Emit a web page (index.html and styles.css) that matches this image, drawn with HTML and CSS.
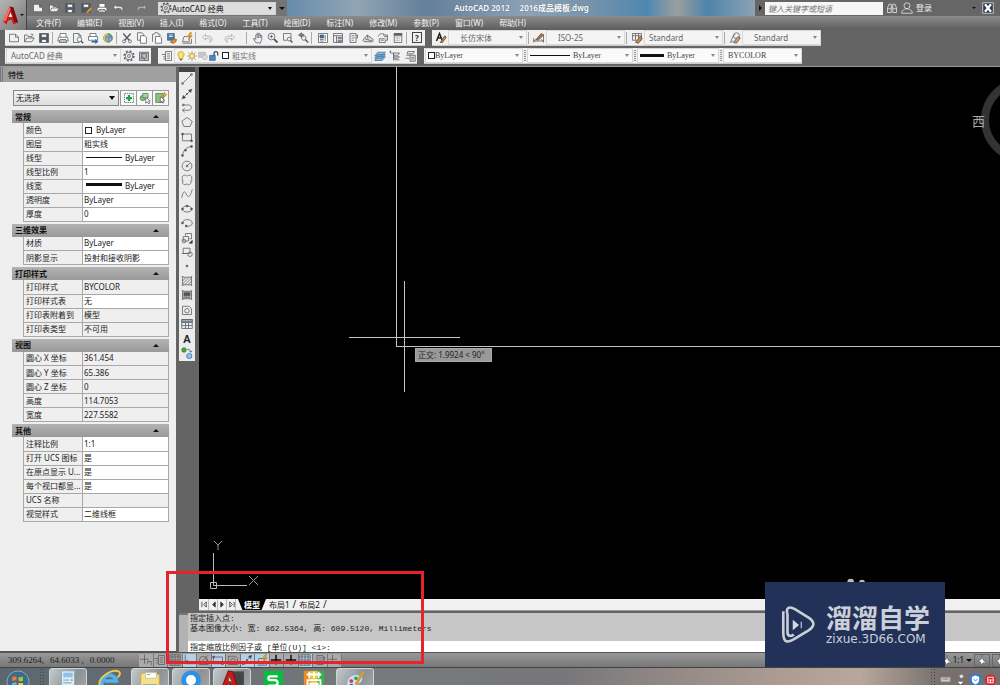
FILE: index.html
```html
<!DOCTYPE html>
<html lang="zh-CN">
<head>
<meta charset="utf-8">
<title>AutoCAD 2012 - 2016成品模板.dwg</title>
<link rel="stylesheet" href="styles.css">
</head>
<body>
<svg class="defs" aria-hidden="true">
  <symbol id="new" viewBox="0 0 16 16"><path d="M2 3h8l4 4v6H2zM10 3v4h4"/></symbol>
  <symbol id="open" viewBox="0 0 16 16"><path d="M2 13V4h4l1 2h5v2M2 13l3-5h10l-3 5zM10 3h3v2"/></symbol>
  <symbol id="save" viewBox="0 0 16 16"><path d="M2 2h12v12H2z" fill="#4d5866"/><path d="M4.500 3h7v4h-7zM5 10h6v4H5z" fill="#fff"/></symbol>
  <symbol id="saveas" viewBox="0 0 16 16"><path d="M2 2h12v12H2z" fill="#4d5866"/><path d="M4.500 3h7v4h-7z" fill="#fff"/><path d="M8 14l6-7 2 2-6 6z" fill="#e5a13b" stroke="#b46a14"/></symbol>
  <symbol id="print" viewBox="0 0 16 16"><path d="M4 7V2h8v5M2 7h12l1 5H1zM4 10h8l1 4H3z" fill="#fff"/></symbol>
  <symbol id="preview" viewBox="0 0 16 16"><path d="M10 14H2V2h7l3 3v2M9 2v3h3"/><circle cx="10" cy="10" r="3" fill="#dff"/><path d="M12 12l3 3" stroke-width="2"/></symbol>
  <symbol id="publish" viewBox="0 0 16 16"><path d="M4 6V2h8v4M2 6h12v5H2z" fill="#fff"/><path d="M6 12h5V9l4 4-4 3v-2H6z" fill="#2a6cb3" stroke="none"/></symbol>
  <symbol id="globe" viewBox="0 0 16 16"><circle cx="8" cy="8" r="6" fill="#e9d24c" stroke="#9a9a55"/><path d="M8 2a6 6 0 016 6l-6 1z" fill="#58a55a" stroke="none"/><path d="M5 6l4-2 4 2v5l-4 2-4-2zM5 6l4 2 4-2M9 8v5" fill="#8fb4dd" stroke="#57789f"/></symbol>
  <symbol id="cut" viewBox="0 0 16 16"><path d="M3 2l8 9M13 2L5 11" stroke-width="1.800"/><circle cx="4" cy="12.500" r="2"/><circle cx="12" cy="12.500" r="2"/></symbol>
  <symbol id="copy" viewBox="0 0 16 16"><path d="M2 11V1h6l2 2v8z"/><path d="M6 15V5h6l2 2v8z" fill="#fff"/></symbol>
  <symbol id="paste" viewBox="0 0 16 16"><path d="M2 13V3h2l1-2h4l1 2h2v3"/><path d="M6 15V6h6l2 2v7z" fill="#fff"/></symbol>
  <symbol id="match" viewBox="0 0 16 16"><path d="M2 2h9v9H2z" fill="#3b78be"/><path d="M4 4h5M4 6h5" stroke="#fff"/><path d="M6 14l4-5 4 1-1 3-3 2z" fill="#dc9339" stroke="#8f5418"/></symbol>
  <symbol id="block" viewBox="0 0 16 16"><path d="M2 13h9V6H4zM2 15h12V9"/><path d="M12 1l-3 5h3l-2 4 5-5h-3l2-4z" fill="#f2b43d" stroke="#c37c19"/></symbol>
  <symbol id="undo" viewBox="0 0 16 16"><path d="M6 3L2 7l4 4V8.500h4c3 0 3 4 1 5 5-1 5-8-1-8H6z"/></symbol>
  <symbol id="redo" viewBox="0 0 16 16"><path d="M10 3l4 4-4 4V8.500H6c-3 0-3 4-1 5-5-1-5-8 1-8h4z"/></symbol>
  <symbol id="hand" viewBox="0 0 16 16"><path d="M5 14L2 9l1-1 2 2V4c0-1 2-1 2 0V2c0-1 2-1 2 0v1c0-1 2-1 2 0v2c0-1 2-1 2 0v5l-2 5zM7 4v4M9 3v5M11 4v4"/></symbol>
  <symbol id="zoom" viewBox="0 0 16 16"><circle cx="6" cy="6" r="4.500" fill="#e4f0f8"/><path d="M4 6h4M6 4v4"/><path d="M9.500 9.500L14 14" stroke-width="2.500"/></symbol>
  <symbol id="zoomwin" viewBox="0 0 16 16"><path d="M2 2h10v7M2 2v9h5"/><circle cx="9.500" cy="9.500" r="2.500"/><path d="M11 11l3 3" stroke-width="2"/></symbol>
  <symbol id="zoomprev" viewBox="0 0 16 16"><circle cx="9" cy="8" r="3"/><path d="M11 10l4 4" stroke-width="2"/><path d="M6 1L2 4l4 3V5h3V3H6z" fill="#888"/></symbol>
  <symbol id="props" viewBox="0 0 16 16"><path d="M2 2h12v12H2z" fill="#fff"/><path d="M4 4h5v4H4z" fill="#2f6cb0"/><path d="M11 4v8M4 10h5M4 12h5"/></symbol>
  <symbol id="dc" viewBox="0 0 16 16"><path d="M2 2h12v12H2zM2 5h12M6 5v9M8 7h2v2H8zM11 7h2v2h-2zM8 11h2v2H8zM11 11h2v2h-2z"/></symbol>
  <symbol id="palette" viewBox="0 0 16 16"><path d="M4 2h8v12H4zM12 4h2v4h-2M6 5h4M6 8h4M6 11h3"/></symbol>
  <symbol id="sheet" viewBox="0 0 16 16"><path d="M1 11l6-7 8 6-1 3H3zM4 9l9 3M7 4l1 5" fill="#ddd"/></symbol>
  <symbol id="markup" viewBox="0 0 16 16"><path d="M2 6c0-4 7-5 8-2M3 9h8v5H3z"/><path d="M8 4h6v7h-3M10 6h3" fill="#ddd"/><path d="M5 11h4"/></symbol>
  <symbol id="calc" viewBox="0 0 16 16"><path d="M3 2h10v12H3zM3 5h10"/><path d="M5 8h6M5 11h6" stroke-dasharray="1 1"/><path d="M3 2h10v2H3z" fill="#666"/></symbol>
  <symbol id="gear" viewBox="0 0 16 16"><circle cx="8" cy="8" r="6.500" stroke-width="2" stroke-dasharray="2.600 2.500"/><circle cx="8" cy="8" r="5"/><circle cx="8" cy="8" r="2"/></symbol>
  <symbol id="wsave" viewBox="0 0 16 16"><path d="M2 3h12v11H2z" fill="#b8bcc0"/><circle cx="8" cy="8" r="3.500"/><path d="M3 12l3-3 3 4M10 4h3M4 5h3"/></symbol>
  <symbol id="style" viewBox="0 0 16 16"><path d="M2 12L6 2l4 10M3.500 8h5" stroke="#222" stroke-width="2"/><path d="M7 14l6-9 2 2-5 7z" fill="#bf854e" stroke="#70441f"/></symbol>
  <symbol id="dim" viewBox="0 0 16 16"><path d="M1 8v6M14 3v11M1 12h13M1 12l3-2M14 12l-3-2"/><path d="M4 10l7-8 3 2-7 7z" fill="#a87547" stroke="#70441f"/></symbol>
  <symbol id="tablestyle" viewBox="0 0 16 16"><path d="M2 2h12v9H2zM2 5h12M6 2v9M10 2v9"/><path d="M6 14l6-8 3 2-5 7z" fill="#c78f55" stroke="#70441f"/></symbol>
  <symbol id="leader" viewBox="0 0 16 16"><path d="M2 14l3-8 3-3M2 14l4-2"/><circle cx="10" cy="5" r="4"/><path d="M6 14l6-8 3 2-5 7z" fill="#c9a37e" stroke="#70441f"/></symbol>
  <symbol id="layers" viewBox="0 0 16 16"><path d="M1 8l4-5h10l-4 5zM1 11l4-5h10l-4 5zM1 14l4-5h10l-4 5z" fill="#8fbce5" stroke="#3d6f9f"/></symbol>
  <symbol id="layerprop" viewBox="0 0 16 16"><path d="M6 2h8v12H6zM8 5h4M8 8h4M8 11h4M1 6h5M3 9h3M3 12h3"/></symbol>
  <symbol id="layerprev" viewBox="0 0 16 16"><path d="M6 4h8l-2 3H6zM7 9h7l-2 2H7zM7 13h7M6 4v10M2 1v3h4M2 1L1 3"/></symbol>
  <symbol id="layerstate" viewBox="0 0 16 16"><path d="M5 2h9l-2 3H4zM3 7h6M2 11h5"/><path d="M8 7h7v8H8zM10 10h3M10 12h3" fill="#ddd"/></symbol>
  <symbol id="bulb" viewBox="0 0 16 16"><path d="M5 10C1 5 4 1 8 1s7 4 3 9v2H5z" fill="#ffe45c" stroke="#a18a22"/><path d="M6 14h4" stroke-width="2"/></symbol>
  <symbol id="sun" viewBox="0 0 16 16"><path d="M8 0v16M0 8h16M2 2l12 12M14 2L2 14" stroke="#98823a"/><circle cx="8" cy="8" r="4" fill="#ffe98a" stroke="#98823a"/></symbol>
  <symbol id="vpfreeze" viewBox="0 0 16 16"><path d="M1 2h11v8H1z" fill="#c9c9c9" stroke="#aaa"/><circle cx="11" cy="10" r="4" fill="#ddd" stroke="#aaa"/></symbol>
  <symbol id="lock" viewBox="0 0 16 16"><path d="M1 7h9v8H1z" fill="#4a8ac4" stroke="#28527c"/><path d="M8 7V4c0-4 6-4 6 0v3" stroke="#28527c" stroke-width="2"/></symbol>
  <symbol id="select-add" viewBox="0 0 16 16"><path d="M2 2h12v12H2z" stroke-dasharray="2 1"/><path d="M8 4v8M4 8h8" stroke="#22a33b" stroke-width="3"/></symbol>
  <symbol id="select-obj" viewBox="0 0 16 16"><circle cx="5" cy="8" r="3.500" fill="#8cc28d" stroke="#4b7a4b"/><path d="M5 2h7v6H5z" fill="#a9d3a7" stroke="#4b7a4b"/><path d="M9 7v8l2-2 2 3 1-1-1-3h2z" fill="#fff"/></symbol>
  <symbol id="quickselect" viewBox="0 0 16 16"><path d="M1 2h10v12H1z" fill="#8dc281" stroke="#4b7a4b"/><path d="M7 6v8l2-2 2 3 1-1-1-3h2z" fill="#fff"/><path d="M13 0l-3 5h3l-2 3 5-5h-3z" fill="#f4bd3a" stroke="#bd7c17"/></symbol>
  <symbol id="line" viewBox="0 0 16 16"><path d="M2 14L14 2"/><path d="M1 13h2v2H1zM13 1h2v2h-2z"/></symbol>
  <symbol id="xline" viewBox="0 0 16 16"><path d="M1 15L15 1"/><path d="M2 14l1-4 3 3zM14 2l-1 4-3-3zM7 8l1-1 1 1-1 1z" fill="#333"/></symbol>
  <symbol id="pline" viewBox="0 0 16 16"><path d="M3 4h7c5 0 5 7 0 7H2M5 8l-3 3 3 3M2 3h2v2H2z"/></symbol>
  <symbol id="polygon" viewBox="0 0 16 16"><path d="M8 2l7 5-3 7H4L1 7z"/></symbol>
  <symbol id="rect" viewBox="0 0 16 16"><path d="M2 4h12v9H2z"/><path d="M1 3h2v2H1zM13 12h2v2h-2z" fill="#333"/></symbol>
  <symbol id="arc" viewBox="0 0 16 16"><path d="M2 14C3 7 7 3 14 2"/><path d="M1 13h2v2H1zM13 1h2v2h-2zM5 6h2v2H5z" fill="#333"/></symbol>
  <symbol id="circle" viewBox="0 0 16 16"><circle cx="8" cy="8" r="6.500"/><path d="M8 8l4-4M7 7h2v2H7z"/></symbol>
  <symbol id="cloud" viewBox="0 0 16 16"><path d="M8 3c2-3 8-1 6 3 1 1 1 3-1 3 2 4-3 7-5 4-3 3-8 0-5-4-2 0-2-2-1-3C0 2 6 0 8 3z"/></symbol>
  <symbol id="spline" viewBox="0 0 16 16"><path d="M1 13C4-2 7 9 8 10c3 4 5-1 7-8"/></symbol>
  <symbol id="ellipse" viewBox="0 0 16 16"><ellipse cx="8" cy="8" rx="6" ry="4"/><path d="M1 7h2v2H1zM13 7h2v2h-2zM7 3h2v2H7z" fill="#333"/></symbol>
  <symbol id="earc" viewBox="0 0 16 16"><path d="M2 8c0-6 13-6 13 0 0 4-5 5-8 4"/><path d="M1 7h2v2H1zM6 11h2v2H6z" fill="#333"/></symbol>
  <symbol id="insert" viewBox="0 0 16 16"><path d="M6 2h8v7h-3M6 2v3M3 6h7v6H3z"/><circle cx="4" cy="12" r="2.500"/><path d="M11 15h4v-4z" fill="#222"/></symbol>
  <symbol id="mkblock" viewBox="0 0 16 16"><path d="M3 3h9v7H3zM1 10h6"/><circle cx="12" cy="11" r="3"/></symbol>
  <symbol id="point" viewBox="0 0 16 16"><path d="M7 7h2v2H7z" fill="#555"/></symbol>
  <symbol id="hatch" viewBox="0 0 16 16"><path d="M2 3h12v10H2zM1 2h2M13 2h2M1 14h2M13 14h2M2 8l5-5M2 12l9-9M5 13l9-9M9 13l5-5"/></symbol>
  <symbol id="gradient" viewBox="0 0 16 16"><path d="M2 3h12v10H2z" fill="#bbb"/><path d="M4 5h8v4H4z" fill="#555"/><path d="M1 2h2M13 2h2M1 14h2M13 14h2M3 11h9"/></symbol>
  <symbol id="region" viewBox="0 0 16 16"><path d="M2 14V3h9l3 3v8z"/><circle cx="8" cy="9" r="3"/></symbol>
  <symbol id="table" viewBox="0 0 16 16"><path d="M1 2h14v12H1zM1 6h14M1 10h14M6 6v8M10 6v8"/><path d="M1 2h14v3H1z" fill="#9ab"/></symbol>
  <symbol id="addsel" viewBox="0 0 16 16"><circle cx="4" cy="4" r="3" fill="#4ea44b" stroke="#2d762b"/><circle cx="11" cy="12" r="3.500" fill="#8ec4ef" stroke="#2c72b3"/><path d="M8 3c4 0 5 2 5 4M11 5l2 2 2-2"/></symbol>
  <symbol id="binoc" viewBox="0 0 16 16"><path d="M2 14V8l2-5h3v11zM9 14V3h3l2 5v6zM7 7h2M2 9h5M9 9h5"/></symbol>
  <symbol id="user" viewBox="0 0 16 16"><circle cx="8" cy="5" r="4"/><path d="M1 15c0-5 3-4 5-6h4c2 2 5 1 5 6z"/></symbol>
  <symbol id="snap" viewBox="0 0 16 16"><path d="M6 1v12M0 7h12M10 10h5v5M10 10v3"/></symbol>
  <symbol id="grid" viewBox="0 0 16 16"><path d="M1 1h14v14H1zM4 1v14M8 1v14M12 1v14M1 4h14M1 8h14M1 12h14"/></symbol>
  <symbol id="ortho" viewBox="0 0 16 16"><path d="M3 1v12h12M3 9h4v4"/></symbol>
  <symbol id="polar" viewBox="0 0 16 16"><path d="M1 14h13M2 13L13 2M10 4a8 8 0 013 8"/><circle cx="7" cy="8" r="5"/></symbol>
  <symbol id="plus" viewBox="0 0 16 16"><path d="M8 1v13M1 8h14" stroke="#111" stroke-width="2"/></symbol>
  <symbol id="annot" viewBox="0 0 16 16"><path d="M7 1l2 7 5 5-5-1-3 3-1-4-4-1 5-3z" fill="#fff"/></symbol>
</svg>

<header class="header">
  <button class="app-button" aria-label="应用程序菜单">
    <svg class="app-logo" viewBox="0 0 18 22"><path d="M1 18L8 2l4 1 5 16-5 2-2-5-4 1-1 4z" fill="#c81d1d"/><path d="M8 2l4 1 5 16-4-1z" fill="#7c0c0d"/><path d="M7 13l2-5 2 5z" fill="#eee"/><path d="M1 18L8 2l1 3-5 12z" fill="#ff6b62"/></svg>
    <i class="caret"></i>
  </button>
  <div class="titlebar">
    <div class="quick">
      <button aria-label="新建"><svg><use href="#new"/></svg></button><button aria-label="打开"><svg><use href="#open"/></svg></button><button aria-label="保存"><svg><use href="#save"/></svg></button><button aria-label="另存为"><svg><use href="#saveas"/></svg></button><button aria-label="打印"><svg><use href="#print"/></svg></button><button aria-label="放弃"><svg><use href="#undo"/></svg></button><i class="dot"></i><button class="dim" aria-label="重做"><svg><use href="#redo"/></svg></button><i class="dot"></i>
    </div>
    <div class="combo workspace-title"><svg><use href="#gear"/></svg><select aria-label="工作空间"><option>AutoCAD 经典</option></select></div>
    <button class="more" aria-label="自定义"><i class="caret"></i></button>
    <h1 class="title"><span>AutoCAD 2012</span><span>2016成品模板.dwg</span></h1>
    <div class="info">
      <button class="expand" aria-label="展开"></button>
      <input class="search" type="search" aria-label="搜索" placeholder="键入关键字或短语">
      <button aria-label="查找"><svg><use href="#binoc"/></svg></button>
      <button class="login"><svg><use href="#user"/></svg>登录</button>
      <i class="caret"></i>
      <button class="exchange" aria-label="Exchange"><svg viewBox="0 0 16 16"><path d="M1 1h14v14H1z" fill="#28394d"/><path d="M4 3l8 10M12 3L4 13" stroke="#fff" stroke-width="3"/></svg></button>
    </div>
  </div>
  <nav class="menubar">
    <button>文件(F)</button><button>编辑(E)</button><button>视图(V)</button><button>插入(I)</button><button>格式(O)</button><button>工具(T)</button><button>绘图(D)</button><button>标注(N)</button><button>修改(M)</button><button>参数(P)</button><button>窗口(W)</button><button>帮助(H)</button>
  </nav>
</header>

<div class="toolbars">
  <div class="toolrow">
    <div class="toolbar">
      <button aria-label="新建"><svg><use href="#new"/></svg></button><button aria-label="打开"><svg><use href="#open"/></svg></button><button aria-label="保存"><svg><use href="#save"/></svg></button><i class="sep"></i>
      <button aria-label="打印"><svg><use href="#print"/></svg></button><button aria-label="打印预览"><svg><use href="#preview"/></svg></button><button aria-label="发布"><svg><use href="#publish"/></svg></button><button aria-label="三维DWF"><svg><use href="#globe"/></svg></button><i class="sep"></i>
      <button aria-label="剪切"><svg><use href="#cut"/></svg></button><button aria-label="复制"><svg><use href="#copy"/></svg></button><button aria-label="粘贴"><svg><use href="#paste"/></svg></button><button aria-label="特性匹配"><svg><use href="#match"/></svg></button><button aria-label="块编辑器"><svg><use href="#block"/></svg></button><i class="sep wide"></i>
      <button class="dim" aria-label="放弃"><svg><use href="#undo"/></svg></button><i class="dot"></i><button class="dim" aria-label="重做"><svg><use href="#redo"/></svg></button><i class="dot"></i><i class="sep wide"></i>
      <button aria-label="平移"><svg><use href="#hand"/></svg></button><button aria-label="实时缩放"><svg><use href="#zoom"/></svg></button><button aria-label="窗口缩放"><svg><use href="#zoomwin"/></svg></button><button aria-label="缩放上一个"><svg><use href="#zoomprev"/></svg></button><i class="sep wide"></i>
      <button aria-label="特性"><svg><use href="#props"/></svg></button><button aria-label="设计中心"><svg><use href="#dc"/></svg></button><button aria-label="工具选项板"><svg><use href="#palette"/></svg></button><button aria-label="图纸集"><svg><use href="#sheet"/></svg></button><button aria-label="标记集"><svg><use href="#markup"/></svg></button><button aria-label="计算器"><svg><use href="#calc"/></svg></button><i class="sep wide"></i>
      <button class="help">?</button>
    </div>
    <div class="toolbar">
      <button aria-label="文字样式"><svg><use href="#style"/></svg></button><div class="combo w79"><select class="mid" aria-label="文字样式"><option>长仿宋体</option></select></div><i class="sep"></i>
      <button aria-label="标注样式"><svg><use href="#dim"/></svg></button><div class="combo w79"><select class="mid" aria-label="标注样式"><option>ISO-25</option></select></div><i class="sep"></i>
      <button aria-label="表格样式"><svg><use href="#tablestyle"/></svg></button><div class="combo w79"><select class="near" aria-label="表格样式"><option>Standard</option></select></div><i class="sep"></i>
      <button aria-label="引线样式"><svg><use href="#leader"/></svg></button><div class="combo w79"><select class="mid" aria-label="引线样式"><option>Standard</option></select></div>
    </div>
  </div>
  <div class="toolrow">
    <div class="toolbar">
      <div class="combo w115"><select class="near" aria-label="工作空间"><option>AutoCAD 经典</option></select></div><button aria-label="工作空间设置"><svg><use href="#gear"/></svg></button><button aria-label="保存工作空间"><svg><use href="#wsave"/></svg></button>
    </div>
    <div class="toolbar layer-bar">
      <button aria-label="图层特性"><svg><use href="#layerprop"/></svg></button>
      <div class="combo w198"><svg><use href="#bulb"/></svg><svg><use href="#sun"/></svg><svg><use href="#vpfreeze"/></svg><svg><use href="#lock"/></svg><i class="swatch"></i><select aria-label="图层"><option>粗实线</option></select></div>
      <button aria-label="图层"><svg><use href="#layers"/></svg></button><button aria-label="上一个图层"><svg><use href="#layerprev"/></svg></button><button aria-label="图层状态"><svg><use href="#layerstate"/></svg></button>
    </div>
    <div class="toolbar serif">
      <div class="combo w98"><i class="swatch"></i><select aria-label="颜色"><option>ByLayer</option></select></div><i class="grip"></i>
      <div class="combo w106"><i class="stroke thin"></i><select aria-label="线型"><option>ByLayer</option></select></div><i class="grip"></i>
      <div class="combo w82"><i class="stroke thick"></i><select aria-label="线宽"><option>ByLayer</option></select></div><i class="grip"></i>
      <div class="combo w79"><select class="near" aria-label="打印样式"><option>BYCOLOR</option></select></div>
    </div>
  </div>
</div>

<main class="main">
  <aside class="palette">
    <h2 class="palette-title">特性</h2>
    <div class="selection">
      <div class="combo"><select aria-label="选择"><option>无选择</option></select></div>
      <button aria-label="切换 PICKADD"><svg><use href="#select-add"/></svg></button><button aria-label="选择对象"><svg><use href="#select-obj"/></svg></button><button aria-label="快速选择"><svg><use href="#quickselect"/></svg></button>
    </div>
    <section class="group"><h3>常规<i class="up"></i></h3>
      <table>
        <tr><th>颜色</th><td><i class="swatch"></i>ByLayer</td></tr>
        <tr><th>图层</th><td>粗实线</td></tr>
        <tr><th>线型</th><td><i class="stroke thin"></i>ByLayer</td></tr>
        <tr><th>线型比例</th><td>1</td></tr>
        <tr><th>线宽</th><td><i class="stroke thick"></i>ByLayer</td></tr>
        <tr><th>透明度</th><td>ByLayer</td></tr>
        <tr><th>厚度</th><td>0</td></tr>
      </table>
    </section>
    <section class="group"><h3>三维效果<i class="up"></i></h3>
      <table>
        <tr><th>材质</th><td>ByLayer</td></tr>
        <tr><th>阴影显示</th><td>投射和接收阴影</td></tr>
      </table>
    </section>
    <section class="group"><h3>打印样式<i class="up"></i></h3>
      <table>
        <tr><th>打印样式</th><td class="ro">BYCOLOR</td></tr>
        <tr><th>打印样式表</th><td>无</td></tr>
        <tr><th>打印表附着到</th><td class="ro">模型</td></tr>
        <tr><th>打印表类型</th><td class="ro">不可用</td></tr>
      </table>
    </section>
    <section class="group"><h3>视图<i class="up"></i></h3>
      <table>
        <tr><th>圆心 X 坐标</th><td class="ro">361.454</td></tr>
        <tr><th>圆心 Y 坐标</th><td class="ro">65.386</td></tr>
        <tr><th>圆心 Z 坐标</th><td class="ro">0</td></tr>
        <tr><th>高度</th><td class="ro">114.7053</td></tr>
        <tr><th>宽度</th><td class="ro">227.5582</td></tr>
      </table>
    </section>
    <section class="group"><h3>其他<i class="up"></i></h3>
      <table>
        <tr><th>注释比例</th><td>1:1</td></tr>
        <tr><th>打开 UCS 图标</th><td>是</td></tr>
        <tr><th>在原点显示 U...</th><td>是</td></tr>
        <tr><th>每个视口都显...</th><td>是</td></tr>
        <tr><th>UCS 名称</th><td class="ro"></td></tr>
        <tr><th>视觉样式</th><td>二维线框</td></tr>
      </table>
    </section>
  </aside>

  <div class="work">
    <div class="work-top">
      <div class="draw-tools">
        <button aria-label="直线"><svg><use href="#line"/></svg></button><button aria-label="构造线"><svg><use href="#xline"/></svg></button><button aria-label="多段线"><svg><use href="#pline"/></svg></button><button aria-label="正多边形"><svg><use href="#polygon"/></svg></button><button aria-label="矩形"><svg><use href="#rect"/></svg></button><button aria-label="圆弧"><svg><use href="#arc"/></svg></button><button aria-label="圆"><svg><use href="#circle"/></svg></button><button aria-label="修订云线"><svg><use href="#cloud"/></svg></button><button aria-label="样条曲线"><svg><use href="#spline"/></svg></button><button aria-label="椭圆"><svg><use href="#ellipse"/></svg></button><button aria-label="椭圆弧"><svg><use href="#earc"/></svg></button><button aria-label="插入块"><svg><use href="#insert"/></svg></button><button aria-label="创建块"><svg><use href="#mkblock"/></svg></button><button aria-label="点"><svg><use href="#point"/></svg></button><button aria-label="图案填充"><svg><use href="#hatch"/></svg></button><button aria-label="渐变色"><svg><use href="#gradient"/></svg></button><button aria-label="面域"><svg><use href="#region"/></svg></button><button aria-label="表格"><svg><use href="#table"/></svg></button><button class="mtext">A</button><button aria-label="添加选定对象"><svg><use href="#addsel"/></svg></button>
      </div>
      <div class="viewport">
        <div class="canvas">
          <svg class="drawing"><g stroke="#c4c4c4"><path d="M197.500 0V279.500"/><line x1="197" y1="279.500" x2="100%" y2="279.500"/><path d="M205.500 214V325M150 270.500H261"/></g></svg>
          <div class="tip">正交: 1.9924 &lt; 90°</div>
          <svg class="compass" viewBox="0 0 30 90"><circle cx="53" cy="45" r="38" stroke="#333" stroke-width="8"/><text x="2" y="51">西</text></svg>
          <svg class="ucs" viewBox="0 0 60 52"><path d="M4.500 9V41.500H38M1.500 38.500h6v6h-6z" stroke="#bbb"/><path d="M5 -3l4 4 4-4M9 1v5M40 32l9 9M49 32l-9 9" stroke="#999"/></svg>
        </div>
        <div class="tabs">
          <div class="tabnav"><button aria-label="第一个"><svg viewBox="0 0 8 8"><path d="M1 1v6M6 1L3 4l3 3z"/></svg></button><button aria-label="上一个"><svg viewBox="0 0 8 8"><path d="M6 1L3 4l3 3z" fill="#333"/></svg></button><button aria-label="下一个"><svg viewBox="0 0 8 8"><path d="M2 1l3 3-3 3z" fill="#333"/></svg></button><button aria-label="最后一个"><svg viewBox="0 0 8 8"><path d="M2 1l3 3-3 3zM7 1v6"/></svg></button></div>
          <button class="tab active">模型</button><button class="tab">布局1</button><span class="slash">/</span><button class="tab">布局2</button><span class="slash">/</span>
        </div>
      </div>
    </div>
    <div class="command">
      <div class="handle"></div>
      <div class="console">
        <div class="history">指定插入点:<br>基本图像大小: 宽: 862.5364, 高: 609.5120, Millimeters</div>
        <input class="prompt" aria-label="命令行" value="指定缩放比例因子或 [单位(U)] &lt;1&gt;:">
      </div>
    </div>
  </div>
</main>

<footer class="status">
  <div class="coords"><span>309.6264,</span><span>64.6033 ,</span><span>0.0000</span></div>
  <div class="modes">
    <button aria-label="推断约束"><svg><use href="#snap"/></svg></button><button aria-label="捕捉"><svg><use href="#layerprop"/></svg></button><button aria-label="栅格"><svg><use href="#grid"/></svg></button><button class="on" aria-label="正交"><svg><use href="#ortho"/></svg></button><button aria-label="极轴"><svg><use href="#polar"/></svg></button><button class="on" aria-label="对象捕捉"><svg><use href="#rect"/></svg></button><button aria-label="三维捕捉"><svg><use href="#region"/></svg></button><button class="on" aria-label="对象追踪"><svg><use href="#xline"/></svg></button><button class="on" aria-label="动态UCS"><svg><use href="#block"/></svg></button><button aria-label="动态输入"><svg><use href="#plus"/></svg></button><button aria-label="线宽"><svg><use href="#plus"/></svg></button><button class="on" aria-label="透明度"><svg><use href="#grid"/></svg></button><button aria-label="快捷特性"><svg><use href="#palette"/></svg></button><button aria-label="选择循环"><svg><use href="#snap"/></svg></button>
  </div>
  <div class="scale"><svg><use href="#annot"/></svg><button>1:1</button><i class="caret"></i><button class="lit" aria-label="注释可见性"><svg><use href="#annot"/></svg></button><button aria-label="自动添加比例"><svg><use href="#annot"/></svg></button></div>
</footer>

<div class="taskbar">
  <button class="start" aria-label="开始"><svg viewBox="0 0 26 26"><circle cx="13" cy="13" r="12" fill="#356d94" stroke="#9ab"/><path d="M6 8q3-3 6-1v5q-3-1-6 1z" fill="#ee7b3c"/><path d="M13 7q3 1 6-1v6q-3 2-6 0z" fill="#94cb52"/><path d="M6 14q3-2 6-1v5q-3-1-6 1z" fill="#5bb5eb"/><path d="M13 13q3 2 6 0v6q-3 1-6-1z" fill="#f8d648"/></svg></button>
  <i class="dots"></i>
  <button class="task open" aria-label="文档"><svg viewBox="0 0 26 26"><path d="M6 2h14v22H6z" fill="#dcecf8" stroke="#8ab"/><path d="M8 4h10v5H8z" fill="#8fc0e8" stroke="none"/><path d="M8 12h6M8 15h9" stroke="#7a9cb8"/><path d="M16 11h2v2h-2z" fill="#e4a33a" stroke="none"/></svg></button>
  <button class="task" aria-label="浏览器"><svg viewBox="0 0 26 26"><path d="M20 19a8 8 0 11 1-6H8" stroke="#4fb4f0" stroke-width="4"/><path d="M3 18C0 9 17-1 24 3c2 2 0 5-2 6" stroke="#f1c84a" stroke-width="2"/></svg></button>
  <button class="task open" aria-label="资源管理器"><svg viewBox="0 0 26 26"><path d="M3 5l9-2 2 3h9v20H3z" fill="#f6df8a" stroke="#c9a84c"/><path d="M8 4h12v6H8z" fill="#fff" stroke="#c9c2a0"/><path d="M10 6h3" stroke="#4a9"/><path d="M6 17h14v9H6z" fill="#8fc2e8" stroke="#7aa4c4"/></svg></button>
  <button class="task open" aria-label="云盘"><svg viewBox="0 0 26 26"><circle cx="13" cy="12" r="8" fill="#fff" stroke="#2c92e8" stroke-width="5"/><path d="M14 22c0-6 8-6 9-2 3 0 3 5 0 5h-8z" fill="#fff" stroke="none"/></svg></button>
  <button class="task open" aria-label="AutoCAD"><svg viewBox="0 0 26 26"><path d="M13 3h13v16H13z" fill="#444"/><path d="M2 20L9 2l5 1 5 17-5-2-5-2z" fill="#cc1717" stroke="#7c0c0d"/><path d="M10 8l3 6-4-1z" fill="#eee"/></svg></button>
  <button class="task" aria-label="WPS"><svg viewBox="0 0 26 26"><path d="M3 2h21v23H3z" fill="#08bd3b" stroke="none"/><path d="M18 8H10q-2 0-2 2t2 2h5q3 0 3 3t-3 3H8" stroke="#fff" stroke-width="2.500"/></svg></button>
  <button class="task" aria-label="看图"><svg viewBox="0 0 26 26"><path d="M2 2h7v24H2z" fill="#f08a28" stroke="none"/><path d="M9 2h8v24H9z" fill="#e8ce2f" stroke="none"/><path d="M17 2h7v24h-7z" fill="#39b24c" stroke="none"/><path d="M5 6h16M8 3v7M13 3v7M18 3v7M6 12h14v12H6zM9 16h8v5H9z" stroke="#fff" stroke-width="2"/></svg></button>
  <button class="task open" aria-label="画图"><svg viewBox="0 0 26 26"><path d="M4 16C4 8 12 4 18 7c6 3 2 8-1 9-2 1-2 6-6 7-4 0-7-3-7-7z" fill="#c8e0ef" stroke="#7fa7bf"/><circle cx="9" cy="13" r="2" fill="#d33" stroke="none"/><circle cx="14" cy="10" r="2" fill="#3a4" stroke="none"/><circle cx="9" cy="18" r="2" fill="#36c" stroke="none"/><path d="M14 17l8-14" stroke="#d29b41" stroke-width="3"/></svg></button>
  <div class="tray">
    <i class="dots"></i>
    <svg viewBox="0 0 12 12"><path d="M1 3h10v5H1z" fill="#ccc" stroke="#999"/><path d="M3 5h6" stroke="#777"/></svg>
    <svg viewBox="0 0 12 12"><circle cx="7" cy="2" r="2" fill="#ddd" stroke="none"/><path d="M3 8h6l-3 3z" fill="#fff" stroke="none"/></svg>
    <svg viewBox="0 0 12 12"><path d="M6 0l5 2v4q0 4-5 6-5-2-5-6V2z" fill="#fff" stroke="#2b78e8" stroke-width="2"/><path d="M4 5l2 2 2-2" stroke="#2b78e8"/></svg>
    <svg viewBox="0 0 12 12"><circle cx="6" cy="6" r="6" fill="#d8232a" stroke="none"/><path d="M3 3h6v6H3zM3 6h6M6 6v3" stroke="#fff"/></svg>
  </div>
</div>

<div class="highlight"></div>
<div class="watermark">
  <svg class="blobs" viewBox="0 0 28 6"><circle cx="6" cy="6" r="5"/><circle cx="23" cy="7" r="4.500"/></svg>
  <svg class="play" viewBox="0 0 36 36"><path d="M5 5v20c0 12 6 9 11 6l13-8c6-4 6-8 0-12L16 3C11 0 7 1 9 8v17c0 4 4 4 6 2" stroke="#c9ced6" stroke-width="2.500"/><path d="M14 13l6 5-6 5z" fill="#d5d9df" stroke="none"/><path d="M22 15v6" stroke="#d5d9df"/></svg>
  <div class="brand"><strong>溜溜自学</strong><span>zixue.3D66.COM</span></div>
</div>
</body>
</html>
```

FILE: styles.css
```css
* { box-sizing: border-box; }
body {
  margin: 0;
  height: 100vh;
  display: flex;
  flex-direction: column;
  position: relative;
  overflow: hidden;
  background: #646464;
  color: #222;
  font: 8px/12px "Noto Sans", "Noto Sans CJK SC", sans-serif;
}
button, select, input {
  font: inherit;
  color: inherit;
  margin: 0;
  padding: 0;
  border: 0;
  border-radius: 0;
  background: none;
  appearance: none;
  outline: 0;
}
h1, h2, h3 { margin: 0; font-size: 8px; }
i { font-style: normal; flex: none; }
svg { display: block; flex: none; fill: none; stroke: #555a60; stroke-width: 1; }
button svg, .combo svg { width: 12px; height: 12px; }
.defs { position: absolute; width: 0; height: 0; }
button { display: flex; align-items: center; justify-content: center; flex: none; white-space: nowrap; }
.caret { border: 3px solid transparent; border-top-color: #111; border-bottom: 0; width: 0; }
.dot { width: 8px; height: 2px; background: radial-gradient(#777 1px, transparent 1px); }
.dim { opacity: 0.500; }

/* Header */
.header {
  flex: none;
  display: grid;
  grid-template-columns: 27px 1fr;
  grid-template-rows: 16px 14px;
  background: linear-gradient(#777, #666 50%, #8b8b8b 54%, #5d5d5d);
}
.app-button { grid-row: 1 / 3; background: linear-gradient(135deg, #b5b5b5, #777); border-right: 1px solid #444; gap: 1px; }
.app-button .app-logo { width: 17px; height: 22px; stroke: none; }
.app-button .caret { border-width: 2px 2px 0; }
.titlebar {
  display: flex;
  align-items: center;
  background: linear-gradient(90deg, #747474 0 260px, #668cac 260px, #91a4b5 330px, #647f9a 400px, #8ca2b6 500px, #7894aa 560px, #4f87b0 620px, #9c9f9f 650px, #4f83aa 680px, #8ca3b3 728px, #666 728px);
}
.quick { display: flex; align-items: center; padding-left: 3px; width: 131px; flex: none; }
.quick button { width: 16px; height: 14px; }
.quick svg { fill: #eee; }
.combo { display: flex; align-items: center; position: relative; height: 15px; background: #f4f4f4; border: 1px solid #d8d8d8; flex: none; }
.combo select { flex: 1; min-width: 0; height: 100%; padding-right: 10px; line-height: 12px; }
.combo::after { content: ""; position: absolute; right: 3px; top: 5px; border: 2px solid transparent; border-top: 3px solid #888; border-bottom: 0; pointer-events: none; }
.workspace-title { width: 118px; height: 13px; background: #ddd; padding-left: 1px; }
.workspace-title::after { border-top-color: #111; top: 4px; }
.workspace-title select { color: #111; }
.more { width: 12px; height: 13px; }
.title { flex: 1; display: flex; justify-content: center; gap: 10px; color: #fff; font-weight: 600; line-height: 16px; text-shadow: 0 0 1px #567; }
.info { width: 245px; display: flex; align-items: center; color: #eee; flex: none; }
.expand { width: 10px; height: 12px; }
.expand::before { content: ""; border: 3px solid transparent; border-left-color: #111; border-right: 0; }
.search { width: 118px; height: 13px; background: #f6f6f6; padding: 0 3px; font-style: italic; color: #333; }
.search::placeholder { color: #777; opacity: 1; }
.info button svg { stroke: #e8edf2; }
.info > button { margin-left: 3px; }
.info > .expand { margin-left: 0; }
.info .login { gap: 3px; }
.info .caret { margin-left: auto; border-width: 2px 2px 0; }
.info .exchange { margin: 0 6px; }
.menubar { display: flex; gap: 16px; padding-left: 9px; color: #f1f1f1; }

/* Toolbars */
.toolbars { flex: none; display: grid; gap: 2px; padding-bottom: 2px; border-bottom: 1px solid #999; background: #646464; }
.toolrow { display: flex; gap: 7px; padding-left: 5px; }
.toolbar { display: flex; align-items: center; height: 16px; background: #f1f1f1; padding-left: 1px; color: #666; border-bottom: 1px solid #ccc; flex: none; }
.toolbar button { width: 15px; height: 15px; }
.sep { width: 4px; height: 12px; background: linear-gradient(90deg, transparent 1px, #aaa 1px 2px, transparent 2px); }
.sep.wide { width: 5px; }
.help { font-weight: 700; color: #333; line-height: 9px; }
.toolbar .help { width: 10px; height: 11px; margin: 0 3px 0 2px; border: 1px solid #444; }
.w79 { width: 79px; }
.w115 { width: 115px; }
.w198 { width: 198px; }
.w98 { width: 98px; }
.w106 { width: 106px; }
.w82 { width: 82px; }
.combo .mid { padding-left: 11px; }
.combo .near { padding-left: 4px; }
.layer-bar { color: #777; }
.layer-bar .combo { gap: 1px; padding-left: 1px; }
.layer-bar .combo svg { width: 10px; height: 10px; }
.swatch { display: inline-block; width: 7px; height: 7px; border: 1px solid #222; background: #fff; margin: 0 2px; vertical-align: -1px; }
.serif { font-family: "Liberation Serif", serif; color: #444; }
.serif .combo { background: #fafafa; }
.serif .swatch { margin-right: 0; }
.grip { width: 4px; height: 13px; background: repeating-linear-gradient(#999 0 1px, #eee 1px 2px); border: 1px solid #eee; }
.stroke { display: inline-block; background: #111; vertical-align: 3px; margin-right: 3px; }
.stroke.thin { width: 40px; height: 1px; }
.stroke.thick { width: 24px; height: 3px; }
.serif .stroke { margin-left: 2px; }

/* Body */
.main { flex: 1; min-height: 0; display: flex; }
.palette { width: 176px; flex: none; background: #efefef; border-bottom: 1px solid #555; overflow: hidden; }
.palette-title { height: 15px; line-height: 15px; padding-left: 5px; margin-bottom: 8px; background: #a0a0a0; font-weight: 500; border-left: 3px double #777; }
.selection { display: flex; margin: 0 7px 4px 13px; }
.selection .combo { flex: 1; height: 16px; margin-right: 2px; border-color: #888; padding-left: 2px; background: linear-gradient(#f3f3f3, #ddd); }
.selection .combo::after { border-width: 4px 3px 0; border-top-color: #111; }
.selection button { width: 17px; height: 16px; border: 1px solid #999; margin-left: -1px; background: #f8f8f8; }
.group { margin: 0 7px 2px 12px; }
.group h3 { display: flex; align-items: center; justify-content: space-between; height: 13px; padding: 0 10px 0 3px; background: linear-gradient(#b3b3b3, #989898); color: #111; }
.up { border: 3px solid transparent; border-bottom-color: #111; border-top: 0; }
.group table { width: calc(100% - 11px); margin-left: 11px; border-collapse: collapse; table-layout: fixed; }
.group th, .group td { height: 14px; padding: 0 1px; line-height: 12px; border: 1px solid #a8a8a8; text-align: left; font-weight: 400; white-space: nowrap; overflow: hidden; }
.group th { width: 59px; padding-left: 2px; }
.group td { background: #fff; }
.group tr:first-child > * { border-top: 0; }
.group .ro { background: #efefef; }
.group .stroke { margin-left: 2px; width: 36px; }
.group .swatch { margin: 0 4px 0 1px; }

.work { flex: 1; min-width: 0; display: flex; flex-direction: column; padding-left: 3px; }
.work-top { flex: 1; min-height: 0; display: flex; gap: 4px; }
.draw-tools { width: 16px; height: 294px; flex: none; padding: 5px 0 1px; background: linear-gradient(#444 5px, #ececec 5px); display: flex; flex-direction: column; }
.draw-tools button { flex: 1; min-height: 0; }
.draw-tools .mtext { font-size: 11px; font-weight: 600; line-height: 14px; }
.viewport { flex: 1; min-width: 0; display: flex; flex-direction: column; }
.canvas { flex: 1; min-height: 0; position: relative; background: #000; overflow: hidden; }
.drawing { width: 100%; height: 100%; }
.tip { position: absolute; left: 216px; top: 281px; height: 14px; line-height: 12px; padding: 0 6px 0 2px; background: #999; border: 1px solid #aaa; color: #222; }
.compass { position: absolute; right: 0; top: 8px; width: 30px; height: 90px; overflow: visible; }
.canvas text { font-size: 13px; fill: #aaa; stroke: none; }
.ucs { position: absolute; left: 10px; bottom: 3px; width: 60px; height: 52px; overflow: visible; }
.tabs { flex: none; display: flex; align-items: center; height: 12px; background: #f1f1f1; border-bottom: 1px solid #999; }
.tabnav { display: flex; padding-left: 1px; }
.tabnav button { width: 9px; height: 11px; border-right: 1px solid #bbb; }
.tabnav svg { width: 7px; height: 7px; stroke: #444; }
.tab { padding: 0 3px; line-height: 11px; color: #111; }
.tab.active { background: #000; color: #fff; font-weight: 700; padding: 0 6px; clip-path: polygon(0 0, 100% 0, 84% 100%, 16% 100%); margin-left: 2px; }
.slash { font-size: 10px; line-height: 11px; }
.command { flex: none; display: flex; margin-top: 2px; color: #222; font: 8px/10px "Liberation Mono", "Noto Sans CJK SC", monospace; }
.handle { width: 9px; background: #b3b3b3; border-top: 2px solid #777; }
.console { flex: 1; display: flex; flex-direction: column; }
.history { height: 28px; padding: 1px 2px; background: #c6c6c6; }
.prompt { height: 11px; padding: 0 2px; background: #fff; width: 100%; }

/* Status bar */
.status { flex: none; display: flex; align-items: center; height: 15px; background: linear-gradient(#999, #777); border-top: 1px solid #555; }
.coords { display: flex; gap: 6px; width: 133px; margin-right: 6px; padding-left: 8px; font: 9px/13px "Liberation Serif", serif; white-space: pre; }
.modes { display: flex; width: 203px; }
.modes button { flex: 1; height: 13px; background: #aaa; border-right: 1px solid #777; overflow: hidden; }
.modes .on { background: #b4d0e5; }
.scale { margin-left: auto; margin-right: -8px; display: flex; align-items: center; height: 13px; }
.scale button { height: 13px; color: #111; margin-right: 2px; }
.scale > button:nth-of-type(n+2) { border: 1px solid #666; width: 16px; margin: 0 0 0 2px; }
.scale svg { width: 11px; height: 12px; }
.scale .lit svg { fill: #f4df72; }

/* Taskbar */
.taskbar { flex: none; display: flex; height: 18px; overflow: hidden; background: linear-gradient(90deg, #5c666e, #767a7c 380px, #77767a 560px, #aa9a91 770px, #b8a79b 860px, #77706e 940px); border-top: 1px solid #444; }
.start { width: 35px; height: 28px; }
.start svg, .task svg { width: 24px; height: 24px; }
.dots { width: 6px; height: 18px; background: radial-gradient(#444 1px, transparent 1px) 0 0 / 3px 3px; margin: 0 4px; }
.task { width: 38px; height: 26px; margin-right: 3px; }
.task.open { background: linear-gradient(120deg, #c3c8cb, #8c9193 60%, #a5a9ab); border: 1px solid #d0d4d6; border-radius: 3px; }
.tray { margin-left: auto; display: flex; gap: 4px; padding: 6px 4px 0 0; }
.tray .dots { margin: -6px 0 0; }
.tray svg { width: 11px; height: 12px; }

/* Overlays */
.highlight { position: absolute; left: 166px; top: 571px; width: 258px; height: 93px; border: 3px solid #e6242b; }
.watermark { position: absolute; right: 55px; bottom: 18px; width: 180px; height: 85px; display: flex; align-items: center; gap: 10px; padding-left: 13px; background: #223158; color: #cbd0d8; }
.blobs { position: absolute; left: 77px; top: -4px; width: 28px; height: 4px; fill: #bbb; stroke: none; }
.play { width: 38px; height: 38px; }
.brand { display: flex; flex-direction: column; gap: 2px; }
.brand strong { font: 700 26px/26px "Noto Sans CJK SC", sans-serif; }
.brand span { font: 12px/14px "DejaVu Sans", sans-serif; }
```
